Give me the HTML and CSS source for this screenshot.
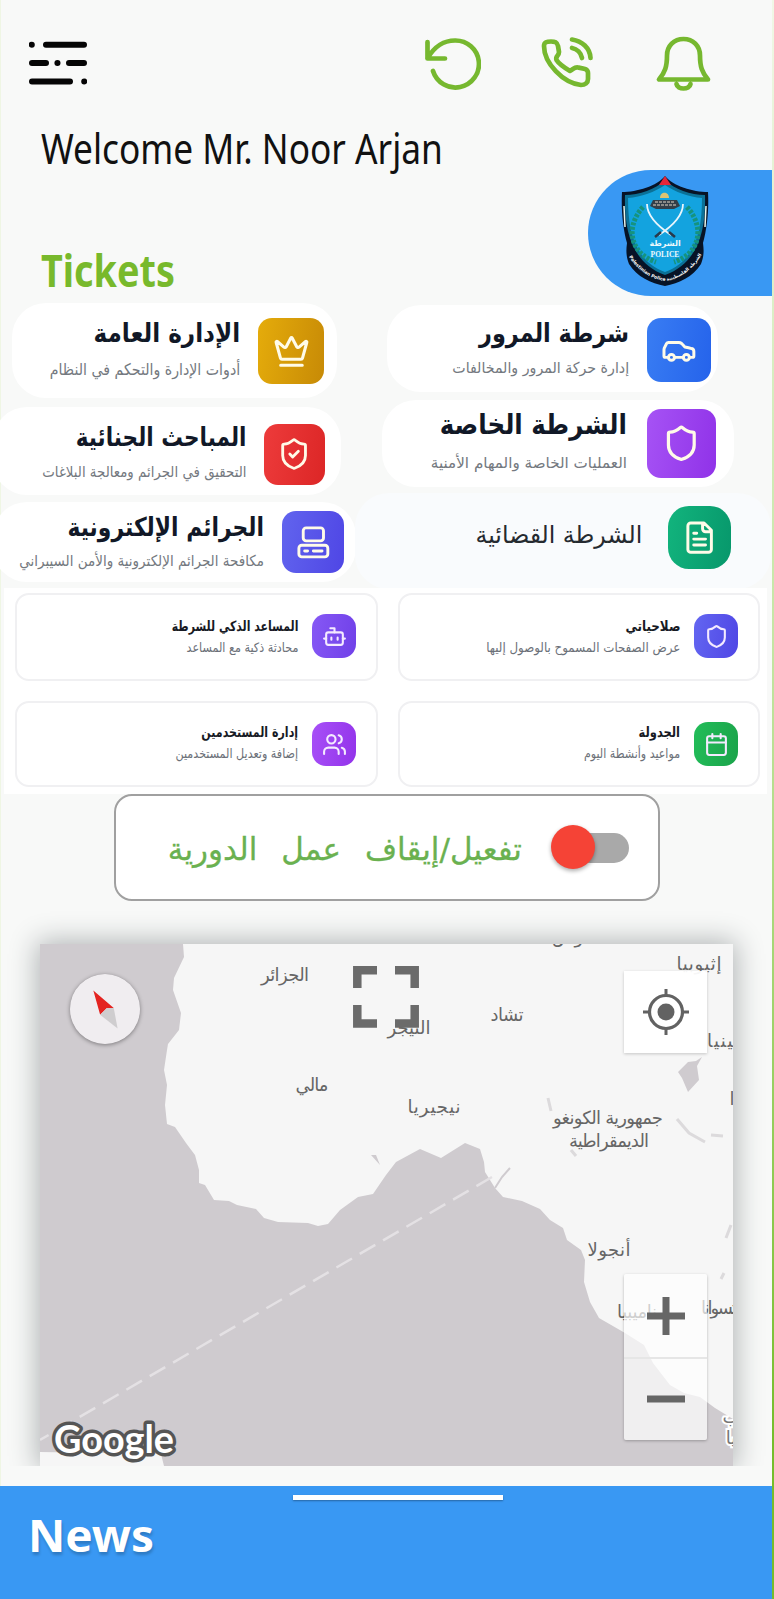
FILE: index.html
```html
<!DOCTYPE html>
<html lang="ar">
<head>
<meta charset="utf-8">
<title>Police Tickets</title>
<link rel="stylesheet" href="styles.css">
</head>
<body>
<div class="screen">
  <header class="topbar">
    <svg class="menu" width="58" height="46" viewBox="0 0 58 46" fill="none" stroke="#050505" stroke-width="6" stroke-linecap="round"><path d="M2.700 3.700h.1M17 3.700h38M3 22h14M28.400 22h.1M40 22h15M3 40.500h38M55.200 40.500h.1"/></svg>
    <nav class="actions">
      <svg width="58" height="54" viewBox="0 0 58 54" fill="none" stroke="#76b82f" stroke-width="4.700" stroke-linecap="round" stroke-linejoin="round"><path d="M4.500 6v16.500H22M4.500 22C12 10 20 4.500 32 4.500A23.500 23.500 0 1 1 10 35"/></svg>
      <svg width="56" height="54" viewBox="0 0 56 54" fill="none" stroke="#76b82f" stroke-width="4.700" stroke-linecap="round" stroke-linejoin="round"><path d="M5 10C5 6 8 5.500 12 5.500 16 5.500 18 6 19 10L20 16C20 20 16 20 17.500 24 20 28 26 32 31 35 35 33 35 31 39 31.500 45 32.500 49 33 49 37V43C49 47 46 49 42 49 24 47 5 27 5 10zM33 3.500C43 5 51 12 51.500 22M33 12C38 13 42 17 43 22"/></svg>
      <svg width="56" height="56" viewBox="0 0 56 56" fill="none" stroke="#76b82f" stroke-width="4.700" stroke-linecap="round" stroke-linejoin="round"><path d="M4 43.500h49c-6-7-8-13-8-24C45 10 38 3 28.500 3S12 10 12 19.500c0 11-2 17-8 24zM21.500 48c1 6 13 6 14 0"/></svg>
    </nav>
  </header>
  <h1 class="welcome"><span>Welcome Mr. Noor Arjan</span></h1>
  <section class="heading">
    <h2><span>Tickets</span></h2>
    <div class="brand">
      <svg width="90" height="112" viewBox="0 0 90 112">
        <path d="M45 1C37 11 17 17 2 17c-1 18 1 37 5 51-1 8-1 13 2 21 8 13 22 19 36 22 14-3 28-9 36-22 3-8 3-13 2-21 4-14 6-33 5-51C73 17 53 11 45 1z" fill="#071326"/>
        <path d="M45 5C36 14 19 20 5 20c-1 34 6 68 40 80 34-12 41-46 40-80C71 20 54 14 45 5z" fill="#0b7197"/>
        <path d="M45 10C35 17 21 22 8 23c0 34 7 63 37 74 30-11 37-40 37-74C69 22 55 17 45 10z" fill="#13a3df"/>
        <path d="M4 31l1 21M86 31l-1 21" stroke="#e8f6ed" stroke-width="1.500"/>
        <path d="M45 1l-6 9h12z" fill="#e5263a"/>
        <path d="M30 31l3-6h24l3 6-6 3H36z" fill="#333f49"/><path d="M35 27h20M33 30h24" stroke="#a9a59d" stroke-width="1.500" stroke-dasharray="3 1"/><path d="M40 23c0-7 9-7 9 0z" fill="#ddc472"/>
        <g fill="none" stroke="#16937e" stroke-width="5" stroke-dasharray="3 1.500"><path d="M23 32C4 53 11 79 36 87M67 32c19 21 12 47-13 55"/></g>
        <g fill="none" stroke="#e7f5fc" stroke-width="1.800"><path d="M27 29c0 13 12 23 24 31M63 29c0 13-12 23-24 31"/></g>
        <path d="M35 62l6-5M55 62l-6-5" stroke="#28394a" stroke-width="2.500"/>
        <text x="45" y="71" class="crest-ar">الشرطة</text><text x="45" y="82" class="crest-en">POLICE</text>
        <path id="ribbon" d="M8 80C18 97 32 104 45 106c13-2 27-9 38-29" fill="none"/>
        <text class="crest-ribbon"><textPath href="#ribbon" startOffset="2">Palestinian Police الشرطة الفلسطينية</textPath></text>
      </svg>
    </div>
  </section>

  <main class="departments">
    <div class="column">
      <article class="dept admin">
        <div class="copy"><h3>الإدارة العامة</h3><p>أدوات الإدارة والتحكم في النظام</p></div>
        <div class="tile"><svg viewBox="0 0 24 24"><path d="M11.560 3.270a.5.5 0 0 1 .88 0L15.400 8.870a1 1 0 0 0 1.510.29L21.180 5.500a.5.5 0 0 1 .8.520l-2.830 10.250a1 1 0 0 1-.960.730H5.810a1 1 0 0 1-.960-.730L2.020 6.020a.5.5 0 0 1 .8-.520l4.270 3.660a1 1 0 0 0 1.520-.290zM5 21h14"/></svg></div>
      </article>
      <article class="dept criminal">
        <div class="copy"><h3>المباحث الجنائية</h3><p>التحقيق في الجرائم ومعالجة البلاغات</p></div>
        <div class="tile"><svg viewBox="0 0 24 24"><path d="M20 13c0 5-3.500 7.500-7.660 8.950a1 1 0 0 1-.670-.010C7.500 20.500 4 18 4 13V6a1 1 0 0 1 1-1c2 0 4.500-1.200 6.240-2.720a1.170 1.170 0 0 1 1.520 0C14.510 3.810 17 5 19 5a1 1 0 0 1 1 1zM9 12l2 2 4-4"/></svg></div>
      </article>
      <article class="dept cyber">
        <div class="copy"><h3>الجرائم الإلكترونية</h3><p>مكافحة الجرائم الإلكترونية والأمن السيبراني</p></div>
        <div class="tile"><svg viewBox="0 0 24 24"><rect x="5" y="2" width="14" height="9" rx="2"/><rect x="2" y="14" width="20" height="8" rx="2"/><path d="M6 18h2M12 18h6"/></svg></div>
      </article>
    </div>
    <div class="column">
      <article class="dept traffic">
        <div class="copy"><h3>شرطة المرور</h3><p>إدارة حركة المرور والمخالفات</p></div>
        <div class="tile"><svg viewBox="0 0 24 24"><path d="M19 17h2c.6 0 1-.4 1-1v-3c0-.9-.7-1.700-1.500-1.900C18.700 10.600 16 10 16 10s-1.300-1.400-2.200-2.300c-.5-.4-1.100-.7-1.800-.7H5c-.6 0-1.100.4-1.400.9l-1.400 2.900A3.700 3.700 0 0 0 2 12v4c0 .6.4 1 1 1h2M9 17h6"/><circle cx="7" cy="17" r="2"/><circle cx="17" cy="17" r="2"/></svg></div>
      </article>
      <article class="dept special">
        <div class="copy"><h3>الشرطة الخاصة</h3><p>العمليات الخاصة والمهام الأمنية</p></div>
        <div class="tile"><svg viewBox="0 0 24 24"><path d="M20 13c0 5-3.500 7.500-7.660 8.950a1 1 0 0 1-.670-.010C7.500 20.500 4 18 4 13V6a1 1 0 0 1 1-1c2 0 4.500-1.200 6.240-2.720a1.170 1.170 0 0 1 1.520 0C14.510 3.810 17 5 19 5a1 1 0 0 1 1 1z"/></svg></div>
      </article>
      <article class="dept judicial">
        <div class="copy"><h3>الشرطة القضائية</h3></div>
        <div class="tile"><svg viewBox="0 0 24 24"><path d="M15 2H6a2 2 0 0 0-2 2v16a2 2 0 0 0 2 2h12a2 2 0 0 0 2-2V7zM14 2v4a2 2 0 0 0 2 2h4M10 9H8M16 13H8M16 17H8"/></svg></div>
      </article>
    </div>
  </main>

  <section class="tools">
    <article class="tool robot"><div class="copy"><h4>المساعد الذكي للشرطة</h4><p>محادثة ذكية مع المساعد</p></div><div class="tile"><svg viewBox="0 0 24 24"><path d="M12 8V4H8M2 14h2M20 14h2M15 13v2M9 13v2"/><rect x="4" y="8" width="16" height="12" rx="2"/></svg></div></article>
    <article class="tool access"><div class="copy"><h4>صلاحياتي</h4><p>عرض الصفحات المسموح بالوصول إليها</p></div><div class="tile"><svg viewBox="0 0 24 24"><path d="M20 13c0 5-3.500 7.500-7.660 8.950a1 1 0 0 1-.670-.010C7.500 20.500 4 18 4 13V6a1 1 0 0 1 1-1c2 0 4.500-1.200 6.240-2.720a1.170 1.170 0 0 1 1.520 0C14.510 3.810 17 5 19 5a1 1 0 0 1 1 1z"/></svg></div></article>
    <article class="tool users"><div class="copy"><h4>إدارة المستخدمين</h4><p>إضافة وتعديل المستخدمين</p></div><div class="tile"><svg viewBox="0 0 24 24"><path d="M16 21v-2a4 4 0 0 0-4-4H6a4 4 0 0 0-4 4v2M22 21v-2a4 4 0 0 0-3-3.870M16 3.130a4 4 0 0 1 0 7.750"/><circle cx="9" cy="7" r="4"/></svg></div></article>
    <article class="tool schedule"><div class="copy"><h4>الجدولة</h4><p>مواعيد وأنشطة اليوم</p></div><div class="tile"><svg viewBox="0 0 24 24"><path d="M8 2v4M16 2v4M3 10h18"/><rect x="3" y="4" width="18" height="18" rx="2"/></svg></div></article>
  </section>

  <section class="patrol">
    <div class="patrol-label">تفعيل/إيقاف عمل الدورية</div>
    <div class="switch"><div class="thumb"></div></div>
  </section>

  <div class="map-area">
    <div class="map">
      <svg width="693" height="522" viewBox="40 944 693 522">
        <rect x="40" y="944" width="693" height="522" fill="#f6f6f6"/>
        <path fill="#cfcbcf" d="M40 944H183L184 957 174 978 173 990 181 1013 179 1030 168 1044 167 1050 164 1070 167 1085 165 1105 167 1124 175 1127 186 1143 195 1155 199 1170 199 1183 205 1185 214 1200 229 1201 237 1205 256 1209 264 1218 278 1222 308 1223 318 1226 328 1224 340 1210 358 1197 373 1194 386 1175 396 1162 420 1149 441 1158 465 1143 480 1149 484 1162 485 1172 495 1188 503 1197 522 1201 540 1209 550 1220 563 1228 567 1240 581 1250 585 1260 584 1282 590 1302 599 1318 625 1333 644 1345 653 1363 670 1385 684 1393 700 1397 715 1408 733 1419V1466H164L161 1454 40 1452z"/>
        <path fill="#cfcbcf" d="M678 1072l10-10 8-1 6-4-5 9 2 14-11 12-6-14zM371 1155l5 0 4 10z"/>
        <path d="M510 1168l-8 9-7 11" fill="none" stroke="#cfcbcf" stroke-width="2"/>
        <path d="M677 1119l12 14 16 9M711 1135l12 1M548 1098l3 13M571 1150l5 6M726 1238l5-13M721 1279l3-6" fill="none" stroke="#dcdadc" stroke-width="3"/>
        <path d="M492 1177L40 1440" stroke="#e4e1e4" stroke-width="2.500" stroke-dasharray="18 9" fill="none"/>
        <g class="places">
          <text x="285" y="981" textLength="48">الجزائر</text><text x="409" y="1034" textLength="43">النيجر</text><text x="507" y="1021" textLength="33">تشاد</text><text x="312" y="1091" textLength="33">مالي</text><text x="434" y="1113" textLength="53">نيجيريا</text>
          <text x="608" y="1124" textLength="110">جمهورية الكونغو</text><text x="609" y="1147" textLength="80">الديمقراطية</text><text x="609" y="1256" textLength="43">أنجولا</text><text x="699" y="970" textLength="45">إثيوبيا</text><text x="725" y="1047" textLength="36">كينيا</text><text x="637" y="1318" textLength="40">ناميبيا</text><text x="724" y="1314" textLength="46">بوتسوانا</text><text x="569" y="943" textLength="34">تونس</text><text x="732" y="1105">ا</text>
          <text x="731" y="1423" class="outlined">ب</text><text x="731" y="1444" class="outlined">يا</text>
        </g>
        <text x="54" y="1453" class="google" textLength="120" lengthAdjust="spacingAndGlyphs">Google</text>
      </svg>
      <svg class="compass" width="70" height="70" viewBox="0 0 72 72"><circle cx="36" cy="36" r="36" fill="#f0edf0"/><path d="M24 17l21 18-7 0-7 7z" fill="#e42320"/><path d="M31 42l7-7 7 0 4 21z" fill="#cfcdcf"/></svg>
      <svg class="expand" width="66" height="62" viewBox="0 0 66 62" fill="none" stroke="#6b6b6b" stroke-width="8.500"><path d="M4.300 22V4.300H24M42 4.300h19.700V22M4.300 39v18.500H24M42 57.500h19.700V39"/></svg>
      <div class="locate"><svg width="46" height="46" viewBox="0 0 46 46"><circle cx="23" cy="23" r="16.500" fill="none" stroke="#626262" stroke-width="3.200"/><circle cx="23" cy="23" r="8.500" fill="#626262"/><path d="M23 0v7M23 39v7M0 23h7M39 23h7" stroke="#626262" stroke-width="3"/></svg></div>
      <div class="zoom"><div><svg width="38" height="38"><path d="M0 19h38M19 0v38" stroke="#666" stroke-width="7"/></svg></div><div><svg width="38" height="38"><path d="M0 18h38" stroke="#666" stroke-width="7"/></svg></div></div>
    </div>
  </div>
  <footer><div class="handle"></div><h2>News</h2></footer>
</div>
</body>
</html>
```
FILE: styles.css
```css
* { box-sizing: border-box; }
body { margin: 0; background: #f8f8f8; font-family: "DejaVu Sans", sans-serif; }
h1, h2, h3, h4, p { margin: 0; font-weight: normal; }
svg { display: block; }
.screen {
  width: 774px; height: 1599px; overflow: hidden; display: flex; flex-direction: column; padding: 0 2px 0 1px;
  background: linear-gradient(#f1f7e6, #c5e5a4 40%, #75bd2c 90%) right / 2px 100% no-repeat, linear-gradient(#eff6e4, #eff6e4) left / 1px 100% no-repeat, #f8f9f8;
}
.topbar { height: 120px; padding: 36px 60px 0 28px; display: flex; justify-content: space-between; align-items: flex-start; flex: none; }
.menu { margin-top: 5px; }
.actions { display: flex; }
.actions svg:nth-child(2) { margin-left: 58px; }
.actions svg:nth-child(3) { margin-left: 60px; margin-right: 1px; }
.welcome, .heading h2 { font-family: "Noto Sans", sans-serif; }
.welcome { height: 50px; padding-left: 40px; font-size: 41px; line-height: 56px; color: #111; white-space: nowrap; flex: none; }
.welcome span { display: inline-block; transform: scaleX(.86); transform-origin: left; }
.heading { height: 126px; display: flex; justify-content: space-between; flex: none; }
.heading h2 { padding: 68px 0 0 40px; font-size: 45px; line-height: 63px; font-weight: 700; color: #78b92c; }
.heading h2 span { display: inline-block; transform: scaleX(.84); transform-origin: left; }
.brand { width: 184px; height: 126px; border-radius: 64px 0 0 64px; background: #3998f3; padding: 5px 0 0 32px; }
.crest-ar, .crest-en { text-anchor: middle; fill: #edf8fc; font-weight: bold; }
.crest-ar { font-size: 8px; }
.crest-en { font: bold 7.500px "Liberation Serif", serif; }
.crest-ribbon { font-size: 4.500px; font-weight: bold; fill: #fff; }

.departments { height: 292px; padding-top: 7px; display: flex; flex: none; }
.column:first-child { width: 345px; }
.column:last-child { flex: 1; padding-top: 2px; }
.dept { background: #fff; border-radius: 34px; display: flex; justify-content: flex-end; }
.copy { direction: rtl; text-align: right; white-space: nowrap; }
.copy h3, .copy h4, .copy p { transform-origin: right; }
.dept .copy { margin-right: 18px; }
.dept h3 { font-weight: bold; color: #111827; line-height: 36px; }
.dept p { color: #747980; line-height: 28px; }
.tile { display: grid; place-items: center; flex: none; border-radius: 14px; }
.tile svg { width: 56%; fill: none; stroke: #fffbe8; stroke-width: 2; stroke-linecap: round; stroke-linejoin: round; }
.admin { height: 95px; margin: 0 9px 9px 11px; padding: 15px 13px; }
.admin .tile { width: 66px; height: 66px; background: linear-gradient(100deg, #e5ac0b, #c78a06); }
.admin h3 { font-size: 26px; margin-top: -3px; transform: scaleX(.89); }
.admin p { font-size: 16px; margin-top: 5px; transform: scaleX(.885); }
.criminal { height: 88px; margin: 0 5px 7px -8px; padding: 17px 16px; }
.criminal .tile { width: 61px; height: 61px; background: linear-gradient(100deg, #ed3b3b, #dc2626); }
.criminal h3 { font-size: 26px; margin-top: -5px; transform: scaleX(.83); }
.criminal p { font-size: 15px; margin-top: 3px; transform: scaleX(.89); }
.cyber { height: 80px; margin: 0 -10px 0 -8px; padding: 9px 12px; }
.cyber .tile { width: 62px; height: 62px; background: linear-gradient(100deg, #6164ee, #4f46e5); }
.cyber h3 { font-size: 26px; margin-top: -2px; transform: scaleX(.84); }
.cyber p { font-size: 15px; margin-top: 2px; transform: scaleX(.9); }
.traffic { height: 87px; margin: 0 54px 8px 41px; padding: 13px 7px; }
.traffic .tile { width: 64px; height: 64px; background: linear-gradient(100deg, #397df3, #2563eb); }
.traffic h3 { font-size: 26px; margin-top: -3px; transform: scaleX(.86); }
.traffic p { font-size: 15px; margin-top: 3px; transform: scaleX(.945); }
.special { height: 87px; margin: 0 38px 6px 36px; padding: 9px 18px; }
.special .tile { width: 69px; height: 69px; background: linear-gradient(100deg, #a653f5, #9032e8); }
.special .copy { margin-right: 20px; }
.special h3 { font-size: 28px; margin-top: -2px; transform: scaleX(.875); }
.special p { font-size: 15px; margin-top: 6px; transform: scaleX(1.01); }
.judicial { height: 96px; margin: 0 1px 0 9px; padding: 13px 40px; background: #f9fbfd; }
.judicial .tile { width: 63px; height: 63px; border-radius: 21px; background: linear-gradient(100deg, #12b47d, #07976b); }
.judicial h3 { font-size: 24px; font-weight: normal; color: #252a30; margin-top: 11px; transform: scaleX(.985); }
.judicial .copy { margin-right: 26px; }

.tools { height: 206px; flex: none; margin: 0 5px 0 3px; padding: 5px 6px 7px 11px; background: #fff; display: grid; grid-template-columns: 363px 362px; grid-template-rows: 88px 86px; column-gap: 20px; row-gap: 20px; }
.tool { border: 2px solid #f0f0f2; border-radius: 14px; display: flex; justify-content: flex-end; padding: 19px 20px; }
.tool .copy { margin-right: 14px; padding-top: 2px; }
.tool h4 { font-size: 14px; font-weight: bold; line-height: 20px; color: #171a24; }
.tool p { font-size: 13px; line-height: 24px; color: #6b7078; }
.tool .tile { width: 44px; height: 44px; }
.tool .tile svg { width: 25px; stroke: #f4eaff; stroke-width: 2; }
.robot h4 { transform: scaleX(.78); }
.robot p { transform: scaleX(.86); }
.access h4 { transform: scaleX(.85); }
.access p { transform: scaleX(.91); }
.users .copy, .schedule .copy { margin-top: -2px; }
.users h4 { transform: scaleX(.79); }
.users p { transform: scaleX(.857); }
.schedule h4 { transform: scaleX(.82); }
.schedule p { transform: scaleX(.85); }
.robot .tile { background: linear-gradient(100deg, #8658f5, #7040e8); }
.access .tile { background: linear-gradient(100deg, #6366f1, #4f46e5); }
.users .tile { background: linear-gradient(100deg, #a750f7, #9333ea); }
.schedule .tile { background: linear-gradient(100deg, #22bd59, #1ba34a); }

.patrol { width: 546px; height: 107px; margin-left: 113px; flex: none; border: 2px solid #a0a0a0; border-radius: 18px; background: #fff; display: flex; justify-content: flex-end; align-items: center; padding-right: 29px; }
.patrol-label { direction: rtl; font-size: 31px; word-spacing: 14px; color: #6ab150; -webkit-text-stroke: .3px #6ab150; white-space: nowrap; margin-right: 53px; padding-top: 3px; }
.switch { width: 54px; height: 30px; border-radius: 15px; background: #a9a9a9; }
.thumb { width: 44px; height: 44px; margin: -8px 0 0 -24px; border-radius: 50%; background: #f54336; box-shadow: 0 2px 4px #0005; }
.map-area { height: 605px; margin-top: -20px; padding: 63px 38px 0 39px; overflow: hidden; flex: none; clip-path: inset(0 0 20px 0); }
.map { position: relative; width: 693px; height: 522px; box-shadow: 0 0 26px 3px #b0b4b5; }
.places text { font: 18px "DejaVu Sans", sans-serif; fill: #666; text-anchor: middle; }
.places .outlined { fill: #777; stroke: #fff; stroke-width: 4px; paint-order: stroke; }
.google { font: 700 39px Lato, sans-serif; fill: #fff; stroke: #555; stroke-width: 7px; paint-order: stroke; stroke-linejoin: round; }
.compass { position: absolute; left: 30px; top: 30px; border-radius: 50%; box-shadow: 0 1px 4px #0006; }
.expand { position: absolute; left: 313px; top: 22px; }
.locate { position: absolute; left: 584px; top: 27px; width: 83px; height: 82px; background: #fffffff0; display: grid; place-items: center; box-shadow: 0 1px 3px #0003; }
.zoom { position: absolute; left: 584px; top: 330px; width: 83px; height: 166px; background: #ffffffb0; display: grid; grid-template-rows: 1fr 1fr; box-shadow: 0 1px 3px #0004; border-radius: 2px; }
.zoom div { display: grid; place-items: center; }
.zoom div + div { border-top: 2px solid #e6e6e6; }
footer { height: 113px; flex: none; margin-left: -1px; background: #3998f3; padding: 9px 0 0 28px; color: #fff; }
.handle { width: 210px; height: 5px; margin-left: 265px; background: #fff; box-shadow: 0 1px 2px #0005; }
footer h2 { width: 130px; font: bold 45px/60px "Noto Sans", sans-serif; margin-top: 5px; text-shadow: 1px 3px 3px #0003; transform: scaleX(1.02); transform-origin: left; }
```
